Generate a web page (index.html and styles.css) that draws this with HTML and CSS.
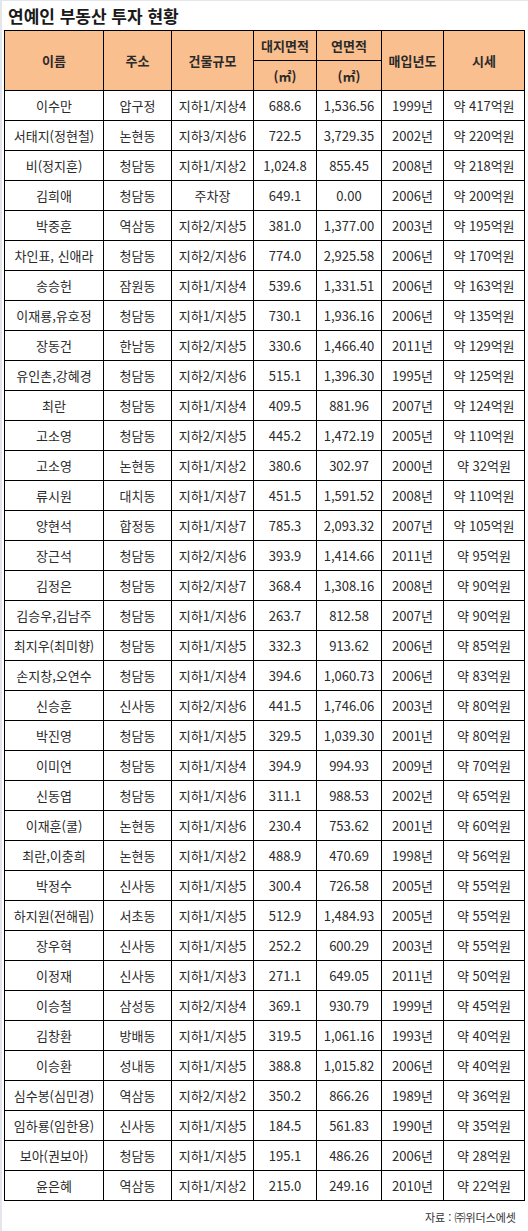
FILE: index.html
```html
<!DOCTYPE html>
<html lang="ko">
<head>
<meta charset="utf-8">
<title>연예인 부동산 투자 현황</title>
<link rel="stylesheet" href="styles.css">
</head>
<body>
<div class="frame">
  <h1 class="title">연예인 부동산 투자 현황</h1>
  <table class="grid">
    <colgroup>
      <col class="c-name"><col class="c-addr"><col class="c-scale"><col class="c-land"><col class="c-floor"><col class="c-year"><col class="c-price">
    </colgroup>
    <thead>
      <tr>
        <th rowspan="2">이름</th>
        <th rowspan="2">주소</th>
        <th rowspan="2">건물규모</th>
        <th>대지면적</th>
        <th>연면적</th>
        <th rowspan="2">매입년도</th>
        <th rowspan="2">시세</th>
      </tr>
      <tr>
        <th>(㎡)</th>
        <th>(㎡)</th>
      </tr>
    </thead>
    <tbody>
      <tr><td>이수만</td><td>압구정</td><td>지하1/지상4</td><td>688.6</td><td>1,536.56</td><td>1999년</td><td>약 417억원</td></tr>
      <tr><td>서태지(정현철)</td><td>논현동</td><td>지하3/지상6</td><td>722.5</td><td>3,729.35</td><td>2002년</td><td>약 220억원</td></tr>
      <tr><td>비(정지훈)</td><td>청담동</td><td>지하1/지상2</td><td>1,024.8</td><td>855.45</td><td>2008년</td><td>약 218억원</td></tr>
      <tr><td>김희애</td><td>청담동</td><td>주차장</td><td>649.1</td><td>0.00</td><td>2006년</td><td>약 200억원</td></tr>
      <tr><td>박중훈</td><td>역삼동</td><td>지하2/지상5</td><td>381.0</td><td>1,377.00</td><td>2003년</td><td>약 195억원</td></tr>
      <tr><td>차인표, 신애라</td><td>청담동</td><td>지하2/지상6</td><td>774.0</td><td>2,925.58</td><td>2006년</td><td>약 170억원</td></tr>
      <tr><td>송승헌</td><td>잠원동</td><td>지하1/지상4</td><td>539.6</td><td>1,331.51</td><td>2006년</td><td>약 163억원</td></tr>
      <tr><td>이재룡,유호정</td><td>청담동</td><td>지하1/지상5</td><td>730.1</td><td>1,936.16</td><td>2006년</td><td>약 135억원</td></tr>
      <tr><td>장동건</td><td>한남동</td><td>지하2/지상5</td><td>330.6</td><td>1,466.40</td><td>2011년</td><td>약 129억원</td></tr>
      <tr><td>유인촌,강혜경</td><td>청담동</td><td>지하2/지상6</td><td>515.1</td><td>1,396.30</td><td>1995년</td><td>약 125억원</td></tr>
      <tr><td>최란</td><td>청담동</td><td>지하1/지상4</td><td>409.5</td><td>881.96</td><td>2007년</td><td>약 124억원</td></tr>
      <tr><td>고소영</td><td>청담동</td><td>지하2/지상5</td><td>445.2</td><td>1,472.19</td><td>2005년</td><td>약 110억원</td></tr>
      <tr><td>고소영</td><td>논현동</td><td>지하1/지상2</td><td>380.6</td><td>302.97</td><td>2000년</td><td>약 32억원</td></tr>
      <tr><td>류시원</td><td>대치동</td><td>지하1/지상7</td><td>451.5</td><td>1,591.52</td><td>2008년</td><td>약 110억원</td></tr>
      <tr><td>양현석</td><td>합정동</td><td>지하1/지상7</td><td>785.3</td><td>2,093.32</td><td>2007년</td><td>약 105억원</td></tr>
      <tr><td>장근석</td><td>청담동</td><td>지하2/지상6</td><td>393.9</td><td>1,414.66</td><td>2011년</td><td>약 95억원</td></tr>
      <tr><td>김정은</td><td>청담동</td><td>지하2/지상7</td><td>368.4</td><td>1,308.16</td><td>2008년</td><td>약 90억원</td></tr>
      <tr><td>김승우,김남주</td><td>청담동</td><td>지하1/지상6</td><td>263.7</td><td>812.58</td><td>2007년</td><td>약 90억원</td></tr>
      <tr><td>최지우(최미향)</td><td>청담동</td><td>지하1/지상5</td><td>332.3</td><td>913.62</td><td>2006년</td><td>약 85억원</td></tr>
      <tr><td>손지창,오연수</td><td>청담동</td><td>지하1/지상4</td><td>394.6</td><td>1,060.73</td><td>2006년</td><td>약 83억원</td></tr>
      <tr><td>신승훈</td><td>신사동</td><td>지하2/지상6</td><td>441.5</td><td>1,746.06</td><td>2003년</td><td>약 80억원</td></tr>
      <tr><td>박진영</td><td>청담동</td><td>지하1/지상5</td><td>329.5</td><td>1,039.30</td><td>2001년</td><td>약 80억원</td></tr>
      <tr><td>이미연</td><td>청담동</td><td>지하1/지상4</td><td>394.9</td><td>994.93</td><td>2009년</td><td>약 70억원</td></tr>
      <tr><td>신동엽</td><td>청담동</td><td>지하1/지상6</td><td>311.1</td><td>988.53</td><td>2002년</td><td>약 65억원</td></tr>
      <tr><td>이재훈(쿨)</td><td>논현동</td><td>지하1/지상6</td><td>230.4</td><td>753.62</td><td>2001년</td><td>약 60억원</td></tr>
      <tr><td>최란,이충희</td><td>논현동</td><td>지하1/지상2</td><td>488.9</td><td>470.69</td><td>1998년</td><td>약 56억원</td></tr>
      <tr><td>박정수</td><td>신사동</td><td>지하1/지상5</td><td>300.4</td><td>726.58</td><td>2005년</td><td>약 55억원</td></tr>
      <tr><td>하지원(전해림)</td><td>서초동</td><td>지하1/지상5</td><td>512.9</td><td>1,484.93</td><td>2005년</td><td>약 55억원</td></tr>
      <tr><td>장우혁</td><td>신사동</td><td>지하1/지상5</td><td>252.2</td><td>600.29</td><td>2003년</td><td>약 55억원</td></tr>
      <tr><td>이정재</td><td>신사동</td><td>지하1/지상3</td><td>271.1</td><td>649.05</td><td>2011년</td><td>약 50억원</td></tr>
      <tr><td>이승철</td><td>삼성동</td><td>지하2/지상4</td><td>369.1</td><td>930.79</td><td>1999년</td><td>약 45억원</td></tr>
      <tr><td>김창환</td><td>방배동</td><td>지하1/지상5</td><td>319.5</td><td>1,061.16</td><td>1993년</td><td>약 40억원</td></tr>
      <tr><td>이승환</td><td>성내동</td><td>지하1/지상5</td><td>388.8</td><td>1,015.82</td><td>2006년</td><td>약 40억원</td></tr>
      <tr><td>심수봉(심민경)</td><td>역삼동</td><td>지하2/지상2</td><td>350.2</td><td>866.26</td><td>1989년</td><td>약 36억원</td></tr>
      <tr><td>임하룡(임한용)</td><td>신사동</td><td>지하1/지상5</td><td>184.5</td><td>561.83</td><td>1990년</td><td>약 35억원</td></tr>
      <tr><td>보아(권보아)</td><td>청담동</td><td>지하1/지상5</td><td>195.1</td><td>486.26</td><td>2006년</td><td>약 28억원</td></tr>
      <tr><td>윤은혜</td><td>역삼동</td><td>지하1/지상2</td><td>215.0</td><td>249.16</td><td>2010년</td><td>약 22억원</td></tr>
    </tbody>
  </table>
  <p class="source">자료 : ㈜위더스에셋</p>
</div>
</body>
</html>
```
FILE: styles.css
```css
html, body {
  margin: 0;
  padding: 0;
  background: #ffffff;
}

.frame {
  width: 528px;
  height: 1231px;
  box-sizing: border-box;
  border-top: 1px solid #e3e7ec;
  border-left: 2px solid #e3e7ec;
  padding: 0 0 0 2px;
  font-family: "Noto Sans CJK KR", "Noto Sans", sans-serif;
  color: #222;
}

.title {
  margin: 0;
  height: 29px;
  padding-left: 4px;
  font-size: 17px;
  font-weight: 700;
  line-height: 30px;
  color: #1a1a1a;
}

.grid {
  border-collapse: collapse;
  table-layout: fixed;
  width: 521px;
}

.c-name { width: 99px; }
.c-addr { width: 68px; }
.c-scale { width: 82px; }
.c-land { width: 63px; }
.c-floor { width: 65px; }
.c-year { width: 62px; }
.c-price { width: 81px; }

.grid th,
.grid td {
  border: 1px solid #000;
  padding: 0;
  text-align: center;
  vertical-align: middle;
  white-space: nowrap;
  overflow: hidden;
  height: 29px;
  font-size: 13px;
  line-height: 16px;
}

.grid th {
  background: #fabf8f;
  font-weight: 700;
  color: #2a2a2a;
}

.grid td {
  font-weight: 400;
  color: #2b2b2b;
}

.source {
  margin: 8px 0 0 0;
  padding-right: 12px;
  text-align: right;
  font-size: 11px;
  line-height: 16px;
  color: #333;
}
```
